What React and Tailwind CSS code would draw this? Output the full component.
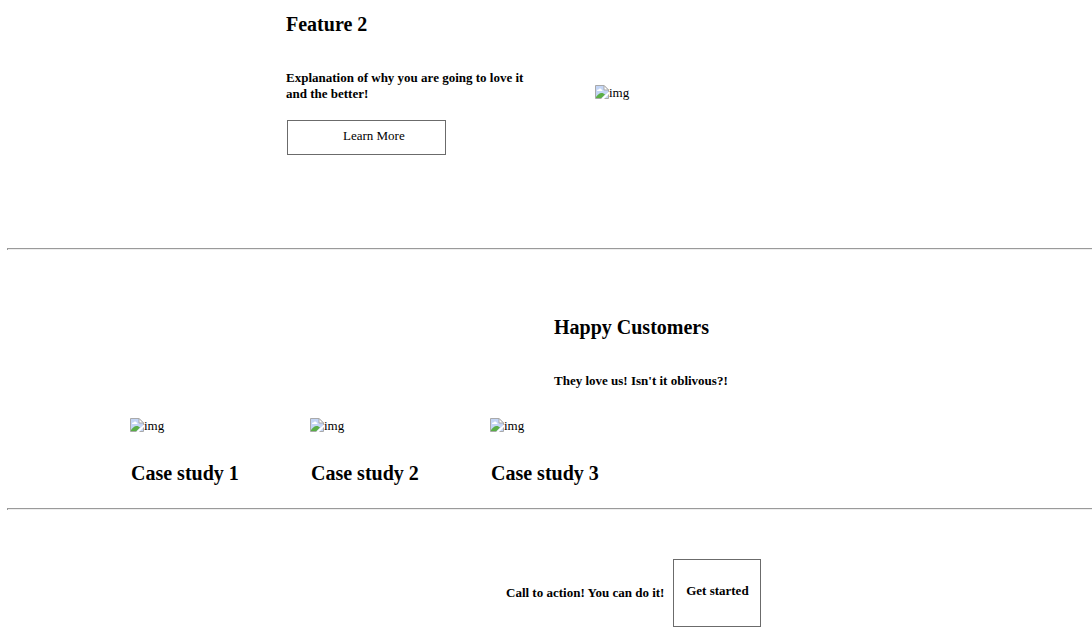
function Picture() {
  return (
    <div role="img" aria-label="img" className="flex items-start text-[13px] leading-4">
      <svg width="14" height="14" viewBox="0 0 14 14" aria-hidden="true">
        <path d="M.5.5H9l4.500 4.500v8.500H.5z" fill="#c3d5f5" stroke="#a9a9a9" />
        <path d="M9 .5V5h4.500z" fill="#fff" stroke="#a9a9a9" />
        <path d="M2 6c0-1.300.9-1.700 1.600-1.500C4 3.200 6 3.200 6.300 4.600c.9 0 1.200.7 1.200 1.400z" fill="#fff" />
        <path d="M1 13v-1c1.500-2.300 3.500-4 5.500-4 1.500 0 2.700.6 3.500 1.500L6.500 13z" fill="#5aae46" />
        <path d="M6 14l8-7.500V9l-5 5z" fill="#fff" />
      </svg>
      <span>img</span>
    </div>
  );
}

function Rule() {
  return <hr className="ml-[7px] h-[2px] border-t border-l border-t-[#9a9a9a] border-l-[#9a9a9a] bg-[#eeeeee]" />;
}

const heading = "text-[20px] leading-6 font-bold";
const strong = "text-[13px] leading-4 font-bold";

const studies = ["Case study 1", "Case study 2", "Case study 3"];

export default function App() {
  return (
    <main className="bg-white font-['Liberation_Serif',serif] text-[13px] leading-4 text-black">
      <section className="flex items-start pt-3 pb-[93px] pl-[286px]">
        <div className="w-[309px]">
          <h2 className={heading}>Feature 2</h2>
          <p className={`mt-[34px] ${strong}`}>
            Explanation of why you are going to love it
            <br />
            and the better!
          </p>
          <button type="button" className="mt-[18px] ml-px block h-[35px] w-[159px] border border-[#6b6b6b] pb-1 pl-[55px] text-left">
            Learn More
          </button>
        </div>
        <div className="pt-[73px]">
          <Picture />
        </div>
      </section>
      <Rule />
      <section className="pt-[65px] pb-[23px]">
        <div className="pl-[554px]">
          <h2 className={heading}>Happy Customers</h2>
          <p className={`mt-[34px] ${strong}`}>They love us! Isn't it oblivous?!</p>
        </div>
        <div className="mt-[29px] flex pl-[130px]">
          {studies.map((name) => (
            <article key={name} className="w-[180px]">
              <Picture />
              <h2 className={`mt-[27px] pl-px ${heading}`}>{name}</h2>
            </article>
          ))}
        </div>
      </section>
      <Rule />
      <section className="flex items-center gap-[9px] pt-[49px] pb-3 pl-[506px]">
        <p className={strong}>Call to action! You can do it!</p>
        <button type="button" className={`h-[68px] w-[88px] border border-[#6b6b6b] pb-1 ${strong}`}>
          Get started
        </button>
      </section>
    </main>
  );
}
